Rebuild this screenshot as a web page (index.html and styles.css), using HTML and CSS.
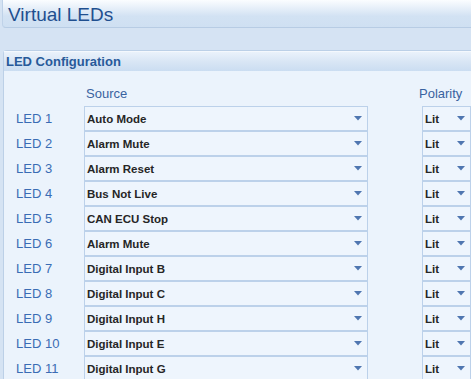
FILE: index.html
```html
<!DOCTYPE html>
<html lang="en">
<head>
    <meta charset="UTF-8">
    <title>Virtual LEDs</title>
    <link rel="stylesheet" href="styles.css">
</head>
<body>
    <div class="page">
        <div class="titulo">
            <h1>Virtual LEDs</h1>
        </div>
        <div class="painel">
            <div class="painel-topo">LED Configuration</div>
            <div class="painel-corpo">
                <div class="cabecalho">
                    <span class="col-led"></span>
                    <span class="cab col-fonte">Source</span>
                    <span class="cab col-pol">Polarity</span>
                </div>
                <div class="linhas" id="linhas">
                    <!-- linhas geradas no script -->
                </div>
            </div>
        </div>
    </div>
    <script>
        const fontes = ['Auto Mode', 'Alarm Mute', 'Alarm Reset', 'Bus Not Live', 'CAN ECU Stop',
            'Alarm Mute', 'Digital Input B', 'Digital Input C', 'Digital Input H', 'Digital Input E',
            'Digital Input G'];
        const linhas = document.getElementById('linhas');
        const seta = '<svg class="seta" width="8" height="5" viewBox="0 0 8 5"><path d="M0 0H8L4 4.5Z" fill="#4f76b0"/></svg>';

        fontes.forEach((fonte, i) => {
            linhas.innerHTML += `<div class="linha">
                <span class="led col-led">LED ${i + 1}</span>
                <div class="combo col-fonte">${fonte}${seta}</div>
                <div class="combo col-pol">Lit${seta}</div>
            </div>`;
        });
    </script>
</body>
</html>
```
FILE: styles.css
```css
* {
    padding: 0;
    margin: 0;
    box-sizing: border-box;
    font-family: 'Liberation Sans', Arial, Helvetica, sans-serif;
}

body {
    background: #d5e3f3;
    overflow: hidden;
}

.page {
    width: 480px;
}

/* Titulo */
.titulo {
    height: 28px;
    margin-left: 2px;
    padding-left: 5px;
    border-left: 1px solid #bfd2e8;
    border-bottom: 1px solid #b7cce4;
    border-bottom-left-radius: 4px;
    background: linear-gradient(#fbfdff 0%, #e3edf8 35%, #d2e2f3 60%, #cfe0f2 100%);
}

.titulo h1 {
    font-size: 19px;
    font-weight: normal;
    line-height: 29px;
    color: #1f4f8f;
}

/* Painel */
.painel {
    margin-top: 22px;
    margin-left: 3px;
    border-left: 1px solid #bcd0e7;
    border-top: 1px solid #bcd0e7;
    border-top-left-radius: 4px;
    background: #ebf3fc;
}

.painel-topo {
    height: 20px;
    padding-left: 2px;
    font-size: 13px;
    font-weight: bold;
    line-height: 20px;
    color: #285a9a;
    background: linear-gradient(#eaf2fb 0%, #d9e6f5 50%, #cbddf1 100%);
    border-top: 1px solid #f4f8fd;
}

.painel-corpo {
    padding-left: 12px;
}

/* Colunas */
.cabecalho, .linha {
    display: flex;
}

.col-led {
    width: 68px;
    flex-shrink: 0;
}

.col-fonte {
    width: 284px;
    flex-shrink: 0;
}

.col-pol {
    width: 49px;
    flex-shrink: 0;
    margin-left: 54px;
}

.cabecalho {
    height: 35px;
    align-items: flex-end;
    padding-bottom: 5px;
}

.cab {
    padding-left: 2px;
    font-size: 13px;
    color: #3962a0;
}

.cab.col-pol {
    padding-left: 0;
    margin-left: 51px;
}

.led {
    align-self: center;
    font-size: 13px;
    color: #3a6cb4;
}

.combo {
    height: 25px;
    display: flex;
    align-items: center;
    justify-content: space-between;
    padding: 0 5px 0 2px;
    font-size: 11.5px;
    font-weight: bold;
    color: #262626;
    background: #eef5fd;
    border: 1px solid #bcd1ea;
}

.seta {
    flex-shrink: 0;
}
```
